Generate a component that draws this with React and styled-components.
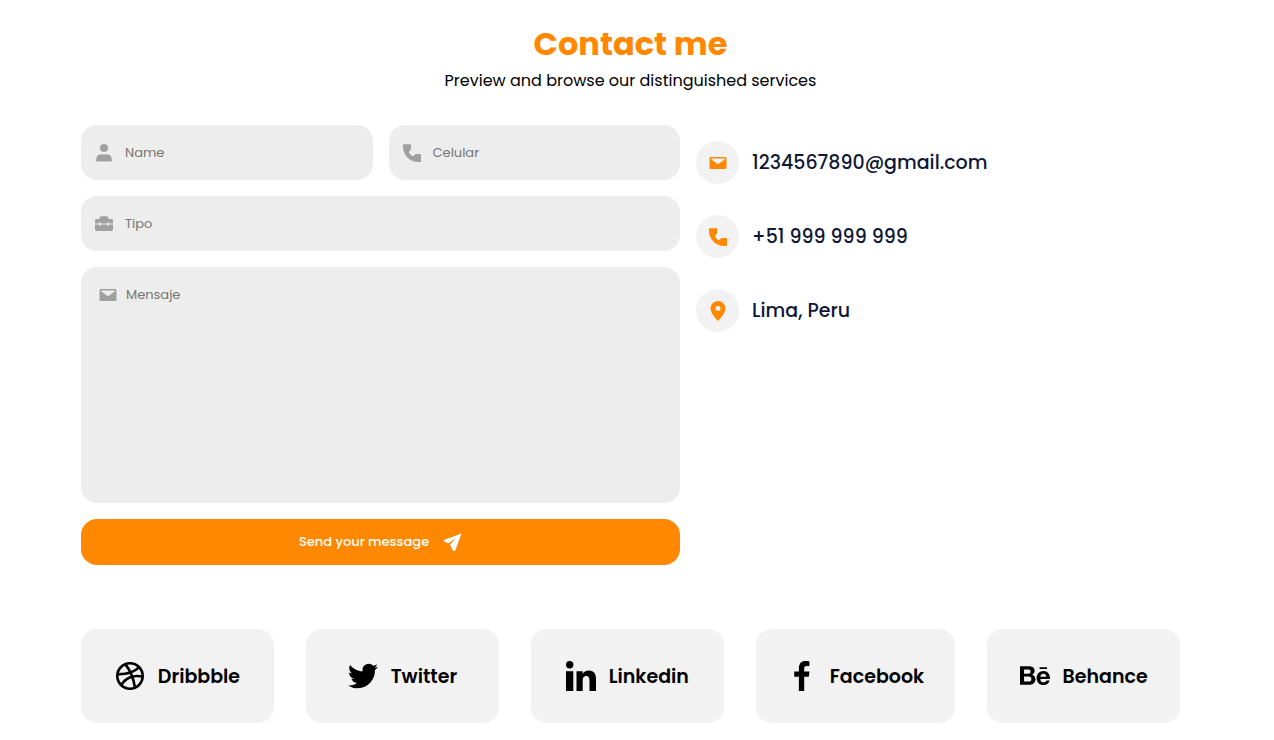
import React, { useState } from 'react'
import styled, { createGlobalStyle, css } from 'styled-components'

const GlobalStyle = createGlobalStyle`
  *,
  *::before,
  *::after {
    box-sizing: border-box;
  }

  body {
    margin: 0;
    background-color: #ffffff;
    color: #000000;
    font-family: Poppins, Inter, 'Open Sans', sans-serif;
    font-size: 16px;
  }
`

const Section = styled.section`
  padding: 24px 94px 17px 81px;
`

const Heading = styled.header`
  text-align: center;
  margin-bottom: 32px;
`

const Title = styled.h1`
  margin: 0;
  color: #ff8800;
  font-size: 32px;
  font-weight: 700;
  line-height: 40px;
`

const Subtitle = styled.p`
  margin: 4px 0 0;
  font-size: 16px;
  line-height: 25px;
`

const Content = styled.div`
  display: grid;
  grid-template-columns: 26fr 21fr;
  gap: 16px;
`

const Form = styled.form`
  display: grid;
  grid-template-columns: 1fr 1fr;
  gap: 16px;
`

const Field = styled.label`
  display: flex;
  align-items: ${props => (props.$multiline ? 'flex-start' : 'center')};
  grid-column: ${props => (props.$wide ? '1 / -1' : 'auto')};
  gap: 11px;
  min-width: 0;
  padding: 0 13px;
  border-radius: 16px;
  background-color: #ededed;
  color: #a0a0a0;

  ${props =>
    props.$multiline &&
    css`
      gap: 8px;
      padding: 18px 17px 0;
    `}
`

const control = css`
  flex: 1;
  min-width: 0;
  padding: 0;
  border: none;
  outline: none;
  background: transparent;
  color: #000000;
  font-family: inherit;
  font-size: 13px;
  line-height: 20px;

  &::placeholder {
    color: #757575;
    opacity: 1;
  }
`

const Input = styled.input`
  ${control}
  height: 55px;
`

const Textarea = styled.textarea`
  ${control}
  display: block;
  height: 218px;
  resize: none;
`

const SendButton = styled.button`
  display: flex;
  grid-column: 1 / -1;
  align-items: center;
  justify-content: center;
  gap: 13px;
  height: 46px;
  padding: 0 16px;
  border: none;
  border-radius: 16px;
  background-color: #ff8800;
  color: #ffffff;
  font-family: inherit;
  font-size: 13px;
  font-weight: 500;
  cursor: pointer;
`

const ContactList = styled.ul`
  display: flex;
  flex-direction: column;
  gap: 31px;
  margin: 0;
  padding: 16px 0 0;
  list-style: none;
`

const ContactItem = styled.li`
  display: flex;
  align-items: center;
  gap: 13px;
  font-size: 19px;
  font-weight: 500;
  color: #0e1836;
`

const ContactIcon = styled.span`
  display: flex;
  align-items: center;
  justify-content: center;
  width: 43px;
  height: 43px;
  border-radius: 50%;
  background-color: #f2f2f2;
  color: #ff8800;
`

const Socials = styled.nav`
  display: flex;
  gap: 32px;
  margin-top: 64px;
`

const SocialLink = styled.a`
  display: flex;
  flex: 1 1 0;
  align-items: center;
  justify-content: center;
  gap: 13px;
  height: 94px;
  padding: 0 31px;
  border-radius: 16px;
  background-color: #f2f2f2;
  color: #000000;
  font-size: 19px;
  font-weight: 600;
  text-decoration: none;
`

const Svg = styled.svg`
  display: block;
  flex: none;
  width: ${props => props.$size}px;
  height: ${props => props.$size}px;
  fill: currentColor;
`

const Icon = ({ size = 20, box = 20, children }) => (
  <Svg $size={size} viewBox={`0 0 ${box} ${box}`} aria-hidden="true">
    {children}
  </Svg>
)

const UserIcon = () => (
  <Icon>
    <circle cx="10" cy="5" r="4" />
    <path d="M2.300 18.500v-2.800a4.300 4.300 0 0 1 4.300-4.300h6.800a4.300 4.300 0 0 1 4.300 4.300v2.800z" />
  </Icon>
)

const PhoneIcon = () => (
  <Icon>
    <path d="M1 1.200h8v5.300L6.700 9c.9 1.800 2.300 3.300 4.300 4.300l2.500-2.300H19v8h-3C7.800 19 1 12.200 1 4z" />
  </Icon>
)

const BriefcaseIcon = () => (
  <Icon>
    <path
      fillRule="evenodd"
      d="M5.500 5V4.300C5.500 3.300 6.200 2.300 7.500 2.300h5c1.300 0 2 1 2 2V5h3c.8 0 1.500.7 1.500 1.500v3h-4V8.300h-1.500v1.200H6.500V8.300H5v1.200H1v-3C1 5.700 1.700 5 2.500 5z"
    />
    <path d="M1 10.500h4v1.300h1.500v-1.300h7v1.300H15v-1.300h4v5c0 .8-.7 1.500-1.500 1.500h-15c-.8 0-1.500-.7-1.500-1.500z" />
  </Icon>
)

const MailIcon = () => (
  <Icon>
    <path
      fillRule="evenodd"
      d="M3.200 4h13.600c1 0 1.700.7 1.700 1.600v8.800c0 .9-.7 1.600-1.700 1.600H3.200c-1 0-1.700-.7-1.700-1.600V5.600c0-.9.7-1.600 1.700-1.600zM3.300 5.400v1.200L10 11.200l6.700-4.600V5.400z"
    />
  </Icon>
)

const PinIcon = () => (
  <Icon>
    <path
      fillRule="evenodd"
      d="M10 0a7.500 7.500 0 0 1 7.500 7.500C17.500 13 10 20 10 20S2.500 13 2.500 7.500A7.500 7.500 0 0 1 10 0zm0 5a2.500 2.500 0 1 0 0 5 2.500 2.500 0 0 0 0-5z"
    />
  </Icon>
)

const SendIcon = () => (
  <Icon>
    <path d="M19.500 1.500L1.800 8c-.5.200-.5.700-.1 1l4.300 2.500 8-5.200-6 6.200 2.900 6c.2.500 1 .5 1.600.5.400 0 .7-.3.900-.8z" />
  </Icon>
)

const DribbbleIcon = () => (
  <Icon size={30} box={30}>
    <g fill="none" stroke="currentColor" strokeWidth="2.600">
      <circle cx="15" cy="15" r="12.700" />
      <path d="M10.200 3.200C15 9 18.500 17 20 26.600" />
      <path d="M2.300 13.200C10 13.400 19 11.700 24.200 6.200" />
      <path d="M6.300 24.200C10 17.500 18 13.300 27.700 15.700" />
    </g>
  </Icon>
)

const TwitterIcon = () => (
  <Icon size={30} box={24}>
    <path d="M23.953 4.570a10 10 0 0 1-2.825.775 4.958 4.958 0 0 0 2.163-2.723c-.951.555-2.005.959-3.127 1.184a4.920 4.920 0 0 0-8.384 4.482C7.690 8.095 4.067 6.130 1.640 3.162a4.822 4.822 0 0 0-.666 2.475c0 1.710.870 3.213 2.188 4.096a4.904 4.904 0 0 1-2.228-.616v.060a4.923 4.923 0 0 0 3.946 4.827 4.996 4.996 0 0 1-2.212.085 4.936 4.936 0 0 0 4.604 3.417 9.867 9.867 0 0 1-6.102 2.105c-.390 0-.779-.023-1.170-.067a13.995 13.995 0 0 0 7.557 2.209c9.053 0 13.998-7.496 13.998-13.985 0-.210 0-.420-.015-.630a9.935 9.935 0 0 0 2.460-2.548z" />
  </Icon>
)

const LinkedinIcon = () => (
  <Icon size={30} box={30}>
    <circle cx="3.700" cy="3.700" r="3.700" />
    <path d="M0 10.200h7.300V30H0z" />
    <path d="M10.500 10.200h6.200v2.700c1-1.900 3-3.300 6-3.300 5.700 0 7.300 3.700 7.300 9V30h-6.500V20c0-2.700-.4-5.100-3.200-5.100-2.900 0-3.600 2.200-3.600 5V30h-6.200z" />
  </Icon>
)

const FacebookIcon = () => (
  <Icon size={30} box={30}>
    <path d="M11.900 30V15.800H7.200v-5.200h4.700V7.200C11.900 2.600 14.400 0 18.500 0c1.700 0 3.200.1 3.900.2v4.700h-2.700c-2 0-2.500 1-2.500 2.500v3.200h5.200l-.6 5.200h-4.600V30z" />
  </Icon>
)

const BehanceIcon = () => (
  <Icon size={30} box={576}>
    <path
      transform="translate(0 26)"
      d="M232 237.200c31.800-15.200 48.400-38.200 48.400-74 0-70.600-52.600-87.800-113.300-87.800H0v354.400h171.800c64.400 0 124.900-30.900 124.900-102.900 0-44.500-21.100-77.400-64.700-89.700zM77.900 135.900H151c28.100 0 53.400 7.900 53.400 40.500 0 30.100-19.700 42.200-47.500 42.200h-79v-82.700zm83.300 233.700H77.900V272h84.900c34.300 0 56 14.300 56 50.600 0 35.800-25.900 47-57.600 47zm358.500-240.700H376V94h143.700v34.900zM576 305.200c0-75.900-44.400-139.200-124.900-139.200-78.200 0-131.300 58.800-131.300 135.800 0 79.900 50.300 134.700 131.300 134.700 60.600 0 99.900-27.600 118.800-87.900h-61.400c-6.600 22.600-34.600 34.600-55.300 34.600-40.900 0-62.400-24.700-62.400-65.800h184.900c.2-4.100.3-8.200.3-12.200zM391.200 274c2.300-33.700 24.700-54.800 58.500-54.800 35.400 0 53.200 20.800 56.200 54.800H391.200z"
    />
  </Icon>
)

const contacts = [
  { icon: MailIcon, text: '1234567890@gmail.com' },
  { icon: PhoneIcon, text: '+51 999 999 999' },
  { icon: PinIcon, text: 'Lima, Peru' }
]

const socials = [
  { icon: DribbbleIcon, name: 'Dribbble' },
  { icon: TwitterIcon, name: 'Twitter' },
  { icon: LinkedinIcon, name: 'Linkedin' },
  { icon: FacebookIcon, name: 'Facebook' },
  { icon: BehanceIcon, name: 'Behance' }
]

const App = () => {
  const [values, setValues] = useState({
    name: '',
    phone: '',
    type: '',
    message: ''
  })

  const bind = name => ({
    name,
    value: values[name],
    onChange: e => setValues({ ...values, [name]: e.target.value })
  })

  const handleSubmit = e => e.preventDefault()

  return (
    <>
      <GlobalStyle />
      <Section>
        <Heading>
          <Title>Contact me</Title>
          <Subtitle>Preview and browse our distinguished services</Subtitle>
        </Heading>
        <Content>
          <Form onSubmit={handleSubmit}>
            <Field>
              <UserIcon />
              <Input
                type="text"
                placeholder="Name"
                aria-label="Name"
                {...bind('name')}
              />
            </Field>
            <Field>
              <PhoneIcon />
              <Input
                type="tel"
                placeholder="Celular"
                aria-label="Celular"
                {...bind('phone')}
              />
            </Field>
            <Field $wide>
              <BriefcaseIcon />
              <Input
                type="text"
                placeholder="Tipo"
                aria-label="Tipo"
                {...bind('type')}
              />
            </Field>
            <Field $wide $multiline>
              <MailIcon />
              <Textarea
                placeholder="Mensaje"
                aria-label="Mensaje"
                {...bind('message')}
              />
            </Field>
            <SendButton type="submit">
              Send your message
              <SendIcon />
            </SendButton>
          </Form>
          <ContactList>
            {contacts.map(({ icon: ItemIcon, text }) => (
              <ContactItem key={text}>
                <ContactIcon>
                  <ItemIcon />
                </ContactIcon>
                {text}
              </ContactItem>
            ))}
          </ContactList>
        </Content>
        <Socials>
          {socials.map(({ icon: ItemIcon, name }) => (
            <SocialLink key={name} href={`#${name.toLowerCase()}`}>
              <ItemIcon />
              {name}
            </SocialLink>
          ))}
        </Socials>
      </Section>
    </>
  )
}

export default App
